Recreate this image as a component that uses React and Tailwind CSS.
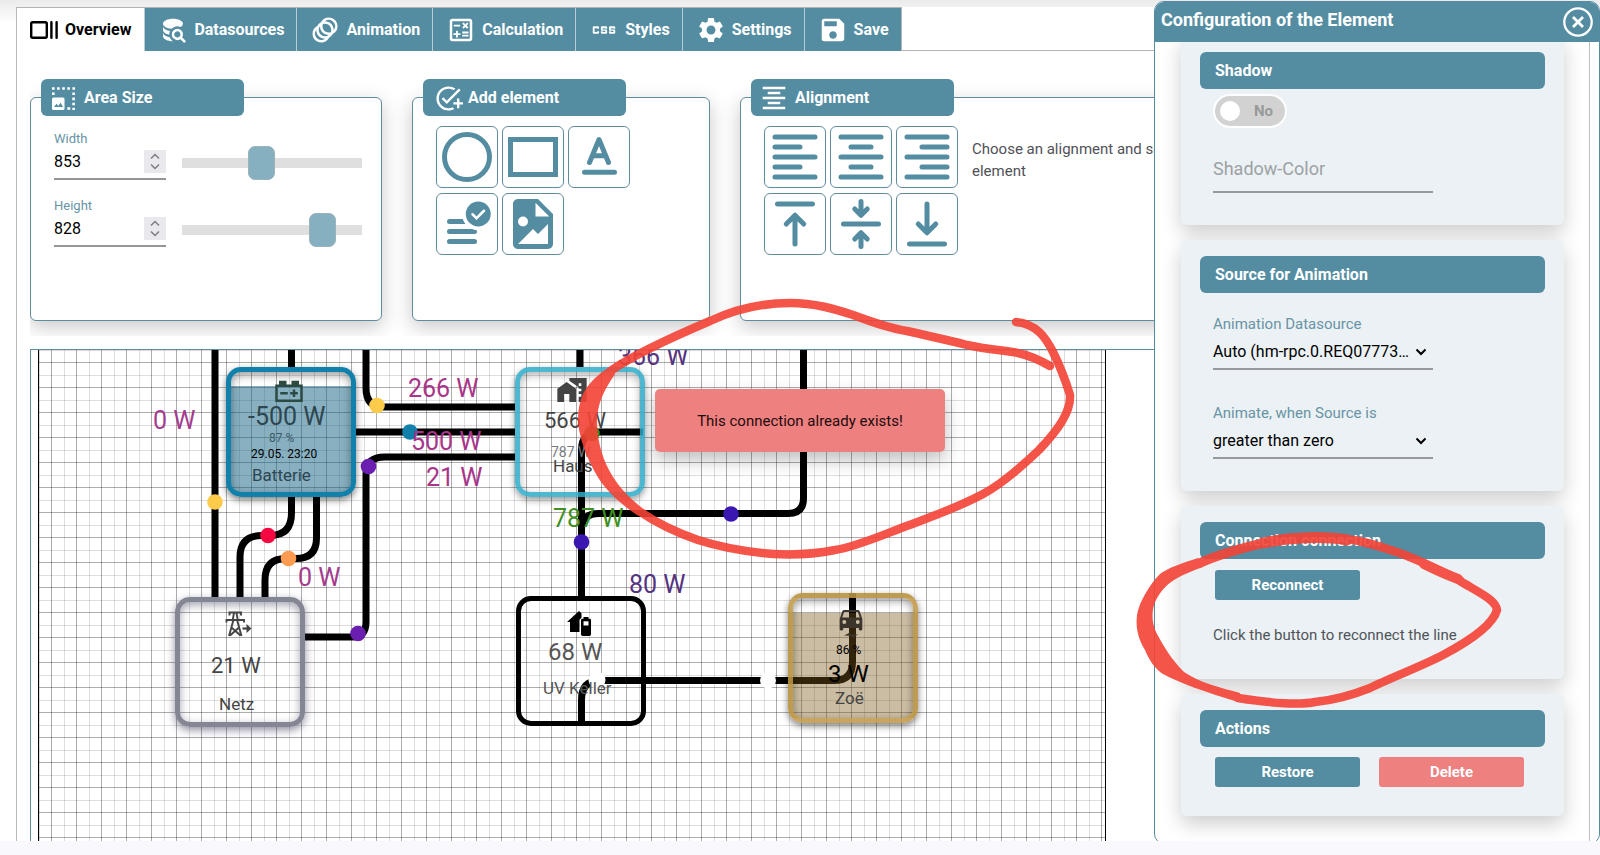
import React from "react";
import {
  MdAnimation,
  MdOutlineCalculate,
  MdCss,
  MdSettings,
  MdSave,
  MdAddTask,
  MdFormatAlignCenter,
  MdHomeWork,
} from "react-icons/md";

/* ---------- icons ---------- */

const Stroke = ({ children, className = "size-[60px]" }) => (
  <svg viewBox="0 0 24 24" className={className} fill="none" stroke="currentColor" strokeWidth="2" strokeLinecap="round" strokeLinejoin="round" aria-hidden="true">
    {children}
  </svg>
);

const OverviewIcon = () => (
  <svg viewBox="0 0 30 30" className="size-[30px]" fill="none" stroke="currentColor" strokeWidth="2.4" strokeLinecap="round" aria-hidden="true">
    <rect x="2.2" y="7.2" width="15.6" height="15.6" rx="1.5" />
    <path d="M22.4 7.3v15.4M27.6 7.3v15.4" />
  </svg>
);

const DatabaseSearchIcon = () => (
  <svg viewBox="0 0 24 24" className="size-[30px]" fill="currentColor" aria-hidden="true">
    <path d="M18.68 12.32a4.49 4.49 0 0 0-6.36.01 4.49 4.49 0 0 0 0 6.36 4.508 4.508 0 0 0 5.57.63L21 22.39 22.39 21l-3.09-3.11c1.13-1.77.87-4.09-.62-5.57m-1.41 4.95c-.98.98-2.56.97-3.54 0-.97-.98-.97-2.56.01-3.54.97-.97 2.55-.97 3.53 0 .97.98.97 2.56 0 3.54M10.9 20.1a6.527 6.527 0 0 1-1.48-2.32C6.27 17.25 4 15.76 4 14v3c0 2.21 3.58 4 8 4-.4-.26-.77-.56-1.1-.9M4 9v3c0 1.68 2.07 3.12 5 3.7v-.2c0-.93.2-1.85.58-2.69C6.34 12.3 4 10.79 4 9m8-6C7.58 3 4 4.79 4 7c0 2 3 3.68 6.85 4h.05c1.2-1.26 2.86-2 4.6-2 .91 0 1.81.19 2.64.56A3.215 3.215 0 0 0 20 7c0-2.21-3.58-4-8-4" />
  </svg>
);

const AreaIcon = () => (
  <svg viewBox="0 0 23 23" className="size-[23px]" aria-hidden="true">
    <path d="M0 1.5h23" stroke="white" strokeWidth="2.6" strokeDasharray="2.6 2.5" fill="none" />
    <path d="M21.6 5.5v17.5" stroke="white" strokeWidth="2.6" strokeDasharray="2.6 2.5" fill="none" />
    <path d="M1.3 5.4v2.6" stroke="white" strokeWidth="2.6" fill="none" />
    <path d="M15.3 21.5h3" stroke="white" strokeWidth="2.6" fill="none" />
    <rect x="0" y="10.5" width="12.5" height="12.5" rx="1.5" fill="white" />
    <path d="M2 20l2.5-3.2 1.8 2.1 2.2-3.2 2.6 4.3z" fill="#548da1" />
  </svg>
);

const TowerIcon = () => (
  <svg viewBox="0 0 28 26" className="h-[26px] w-[28px]" fill="none" stroke="currentColor" strokeWidth="1.9" aria-hidden="true">
    <path d="M4.500 4.600V1.500h11.500v3.100M1.500 11.500V9h17.500v2.500" />
    <path d="M9 1.500L7.800 9M11.500 1.500L12.700 9" />
    <path d="M8.300 9.500L4 25M12.200 9.500L16.500 25M6.500 16.500L15.500 24.500M14 16.500L5 24.500" />
    <path d="M17.500 17.500h6" strokeWidth="2.2" />
    <path d="M21.500 13l5 4.500-5 4.500z" fill="currentColor" stroke="none" />
  </svg>
);

const BatteryHomeIcon = () => (
  <svg viewBox="0 0 24 25" className="h-[25px] w-[24px]" aria-hidden="true">
    <path d="M0 11L12 0l2.5 2.2v4.5l-2 2V21H3V11z" fill="black" />
    <path d="M16.5 6h5v1.8h1.2c.7 0 1.3.6 1.3 1.3v14.2c0 .9-.7 1.7-1.7 1.7h-6.6c-1 0-1.7-.8-1.7-1.7V9.100c0-.7.6-1.3 1.300-1.300h1.200z" fill="black" />
    <path d="M16.500 10.300h5v4.200h-5z" fill="white" />
  </svg>
);

const CarIcon = () => (
  <svg viewBox="0 0 24 28" className="h-[28px] w-[24px]" fill="currentColor" aria-hidden="true">
    <path d="M20.800 1.500C20.500.6 19.700 0 18.700 0H5.300c-1 0-1.800.6-2.100 1.500L.7 9v10.300c0 .7.500 1.200 1.100 1.200H3c.7 0 1.200-.5 1.200-1.200V18h15.600v1.300c0 .7.500 1.200 1.200 1.200h1.200c.6 0 1.100-.5 1.100-1.200V9zM5.300 14a2 2 0 1 1 0-4 2 2 0 0 1 0 4zm13.400 0a2 2 0 1 1 0-4 2 2 0 0 1 0 4zM3.200 7.500l1.900-5.600h13.800l1.900 5.600z" />
    <path d="M5 25.500l6-3v2h8L13 28v-2z" />
  </svg>
);

/* ---------- toolbar ---------- */

const Tab = ({ icon, label, active }) => (
  <button
    type="button"
    role="tab"
    aria-selected={!!active}
    className={
      active
        ? "flex h-[43px] items-center gap-1.5 bg-white pl-[12px] pr-[13px] pt-px text-black"
        : "flex h-[43px] items-center gap-1.5 border-l border-[#b4ccd5] bg-[#548da1] pl-[13px] pr-[12px] pt-px text-white"
    }
  >
    {icon}
    {label}
  </button>
);

const Card = ({ title, icon, className, children }) => (
  <section className={"rounded-[6px] border border-[#608c9d] bg-white shadow-[0_6px_20px_rgba(0,0,0,0.22)] " + className}>
    <h2 className="-mt-[19px] ml-[10px] flex h-[37px] w-[203px] items-center gap-[9px] rounded-[6px] bg-[#548da1] pl-[11px] pt-px text-[16px] font-bold text-white">
      {icon}
      {title}
    </h2>
    {children}
  </section>
);

const Dimension = ({ id, label, value, position }) => (
  <div className="flex items-end gap-[16px]">
    <div className="relative w-[112px]">
      <label htmlFor={id} className="block text-[13px] leading-4 text-[#6894a5]">{label}</label>
      <input
        id={id}
        type="number"
        defaultValue={value}
        className="h-[33px] w-full border-b-2 border-[#96969a] pb-[2px] text-[16px] text-black outline-none [appearance:textfield] [&::-webkit-inner-spin-button]:appearance-none"
      />
      <svg viewBox="0 0 22 23" className="absolute right-0 bottom-[7px] h-[23px] w-[22px] bg-[#e9e9ed]" fill="none" stroke="#7d7d82" strokeWidth="1.500" aria-hidden="true">
        <path d="M7 8.500l4-4 4 4M7 14.500l4 4 4-4" />
      </svg>
    </div>
    <input
      type="range"
      aria-label={label + " slider"}
      min="0"
      max="1000"
      defaultValue={position}
      className="h-[34px] w-[180px] appearance-none bg-transparent [&::-webkit-slider-runnable-track]:h-[10px] [&::-webkit-slider-runnable-track]:bg-[#dfdfdf] [&::-webkit-slider-thumb]:-mt-[12px] [&::-webkit-slider-thumb]:h-[34px] [&::-webkit-slider-thumb]:w-[27px] [&::-webkit-slider-thumb]:appearance-none [&::-webkit-slider-thumb]:rounded-[7px] [&::-webkit-slider-thumb]:border [&::-webkit-slider-thumb]:border-[#9bb3bd] [&::-webkit-slider-thumb]:bg-[#86afbf]"
    />
  </div>
);

const Tool = ({ label, children }) => (
  <button type="button" aria-label={label} className="size-[62px] rounded-[6px] border border-[#608c9d] bg-white text-[#548da1]">
    {children}
  </button>
);

/* ---------- canvas ---------- */

const Node = ({ className, children }) => (
  <div className={"absolute size-[130px] rounded-[15px] border-[5px] " + className}>{children}</div>
);

const Label = ({ className, children }) => (
  <span className={"absolute leading-none whitespace-nowrap " + className}>{children}</span>
);

const Connections = () => (
  <svg viewBox="39 350 1066 491" className="absolute top-0 left-0 h-[491px] w-[1066px]" aria-hidden="true">
    <g fill="none" stroke="black" strokeWidth="7">
      <path d="M215 340V597" />
      <path d="M291.500 340V367" />
      <path d="M291.500 497V513Q291.500 535.500 270 535.500H262Q240 535.500 240 557V597" />
      <path d="M316.500 497V538Q316.500 558.500 296 558.500H286Q265 558.500 265 580V597" />
      <path d="M366 340V388Q366 407 383 407H515" />
      <path d="M356 432H515" />
      <path d="M515 457H385Q366 457 366 474V622Q366 637 352 637H305" />
      <path d="M580 340V367" />
      <path d="M803.500 340V498Q803.500 513.500 788 513.500H599Q581.500 513.500 581.500 530" />
      <path d="M643 432H600Q581.500 432 581.500 450V597" />
      <path d="M581.500 726V700Q581.500 680.500 600 680.500H834Q852.500 680.500 852.500 662V593" />
    </g>
    <g>
      <circle cx="215" cy="502" r="7.800" fill="#fdcb4a" />
      <circle cx="377" cy="405.500" r="7.800" fill="#fdcb4a" />
      <circle cx="410" cy="432" r="7.800" fill="#1181ac" />
      <circle cx="368.500" cy="466.500" r="7.800" fill="#6a1fb0" />
      <circle cx="358" cy="633.500" r="7.800" fill="#6a1fb0" />
      <circle cx="268" cy="535.500" r="7.800" fill="#f5083f" />
      <circle cx="288.500" cy="558.500" r="7.800" fill="#fd9c50" />
      <circle cx="592" cy="433.500" r="7.800" fill="#3a8a1e" />
      <circle cx="731" cy="514" r="7.800" fill="#3917b0" />
      <circle cx="581.500" cy="542" r="7.800" fill="#3917b0" />
      <circle cx="597" cy="680" r="8.500" fill="white" />
      <circle cx="768" cy="680.500" r="8" fill="white" />
    </g>
  </svg>
);

const Canvas = () => (
  <div className="relative ml-[7px] h-full w-[1068px] overflow-hidden border-x border-black bg-white bg-[linear-gradient(to_right,rgba(0,0,0,0.32)_1px,transparent_1px),linear-gradient(to_bottom,rgba(0,0,0,0.32)_1px,transparent_1px),linear-gradient(to_right,rgba(0,0,0,0.13)_1px,transparent_1px),linear-gradient(to_bottom,rgba(0,0,0,0.13)_1px,transparent_1px)] bg-[size:25px_25px] bg-[position:12px_0px,0px_12px,0px_0px,0px_0px]">
    <Connections />

    <Node className="top-[17px] left-[187px] border-[#1181ac] bg-[linear-gradient(to_bottom,transparent_14px,rgba(17,97,130,0.5)_14px)] bg-origin-padding shadow-[0_3px_7px_rgba(0,0,0,0.5),inset_0_3px_9px_rgba(0,0,0,0.4)]" />
    <Node className="top-[17px] left-[476px] border-[#2fabc9]/85 shadow-[0_3px_7px_rgba(0,0,0,0.4),inset_0_3px_8px_rgba(0,0,0,0.3)]" />
    <Node className="top-[247px] left-[136px] border-[#858694] shadow-[0_3px_8px_rgba(50,50,80,0.55),inset_0_3px_9px_rgba(50,50,80,0.45)]" />
    <Node className="top-[246px] left-[477px] border-black" />
    <Node className="top-[243px] left-[749px] border-[#be9644]/85 bg-[linear-gradient(to_bottom,transparent_15px,rgba(125,90,25,0.4)_15px)] bg-origin-padding shadow-[0_3px_7px_rgba(0,0,0,0.5),inset_0_3px_9px_rgba(0,0,0,0.4)]" />

    <svg viewBox="0 0 24 24" className="absolute top-[27px] left-[235px] size-[30px]" fill="#2b4a42" aria-hidden="true">
      <path d="M4 3V6H1V20H23V6H20V3H14V6H10V3H4M3 8H21V18H3V8M15 10V12H13V14H15V16H17V14H19V12H17V10H15M5 12V14H11V12H5Z" />
    </svg>
    <MdHomeWork className="absolute top-[24px] left-[517px] size-[32px] text-[#444]" aria-hidden="true" />
    <div className="absolute top-[261px] left-[186px] text-[#444]"><TowerIcon /></div>
    <div className="absolute top-[261px] left-[528px]"><BatteryHomeIcon /></div>
    <div className="absolute top-[260px] left-[800px] text-[#3b352b]"><CarIcon /></div>

    <Label className="top-[54px] left-[209px] text-[25px] text-[#2d4650]">-500 W</Label>
    <Label className="top-[82px] left-[230px] text-[12px] text-[#3f5c68]">87 %</Label>
    <Label className="top-[98px] left-[212px] text-[12px] text-black">29.05. 23:20</Label>
    <Label className="top-[117px] left-[213px] text-[17px] text-[#2d4650]">Batterie</Label>

    <Label className="top-[60px] left-[505px] text-[22px] text-[#444]">566 W</Label>
    <Label className="top-[95px] left-[512px] text-[14px] text-[#7b7b80]">787 W</Label>
    <Label className="top-[108px] left-[514px] text-[17px] text-[#444]">Haus</Label>

    <Label className="top-[305px] left-[172px] text-[22px] text-[#444]">21 W</Label>
    <Label className="top-[346px] left-[180px] text-[17px] text-[#444]">Netz</Label>

    <Label className="top-[290px] left-[509px] text-[24px] text-[#555]">68 W</Label>
    <Label className="top-[330px] left-[504px] text-[17px] text-[#555]">UV Keller</Label>

    <Label className="top-[294px] left-[797px] text-[12px] text-black">86 %</Label>
    <Label className="top-[312px] left-[789px] text-[24px] text-black">3 W</Label>
    <Label className="top-[340px] left-[796px] text-[17px] text-[#444]">Zoë</Label>

    <Label className="top-[58px] left-[114px] text-[25px] text-[#a33c8e]">0 W</Label>
    <Label className="top-[215px] left-[259px] text-[25px] text-[#a33c8e]">0 W</Label>
    <Label className="top-[26px] left-[369px] text-[25px] text-[#a8358a]">266 W</Label>
    <Label className="top-[79px] left-[372px] text-[25px] text-[#a8358a]">500 W</Label>
    <Label className="top-[115px] left-[387px] text-[25px] text-[#a8358a]">21 W</Label>
    <Label className="-top-[6px] left-[579px] text-[25px] text-[#553380]">366 W</Label>
    <Label className="top-[156px] left-[514px] text-[25px] text-[#3f8f22]">787 W</Label>
    <Label className="top-[222px] left-[590px] text-[25px] text-[#553380]">80 W</Label>
  </div>
);

/* ---------- configuration panel ---------- */

const PanelCard = ({ title, className = "", children }) => (
  <section className={"relative rounded-[6px] bg-[#ebf1f4] px-[19px] pt-[16px] shadow-[0_8px_20px_rgba(0,0,0,0.2)] " + className}>
    <h3 className="flex h-[37px] items-center rounded-[6px] bg-[#548da1] pt-px pl-[15px] text-[16px] font-bold text-white">{title}</h3>
    {children}
  </section>
);

const PanelButton = ({ danger, children }) => (
  <button type="button" className={"h-[30px] w-[145px] rounded-[3px] pt-px text-[15px] font-bold text-white " + (danger ? "bg-[#ee8080]" : "bg-[#548da1]")}>
    {children}
  </button>
);

const SelectField = ({ id, label, value }) => (
  <div className="relative w-[220px]">
    <label htmlFor={id} className="block text-[15px] leading-5 text-[#6894a5]">{label}</label>
    <select id={id} className="h-[36px] w-full appearance-none border-b-2 border-[#96999d] bg-transparent pt-[2px] text-[16px] text-black outline-none">
      <option>{value}</option>
    </select>
    <svg viewBox="0 0 12 8" className="pointer-events-none absolute right-[6px] bottom-[14px] h-[8px] w-[12px]" fill="none" stroke="black" strokeWidth="2" aria-hidden="true">
      <path d="M1.500 1.500L6 6l4.500-4.500" />
    </svg>
  </div>
);

const ConfigPanel = () => (
  <aside className="absolute top-px right-0 -bottom-[3px] flex w-[446px] flex-col overflow-hidden rounded-[10px] border border-[#548da1] bg-white">
    <header className="relative z-10 flex h-[40px] shrink-0 items-center justify-between bg-[#548da1] pl-[6px] pr-[6px]">
      <h2 className="pb-[6px] text-[18px] font-bold text-white">Configuration of the Element</h2>
      <button type="button" aria-label="Close" className="text-white">
        <svg viewBox="0 0 30 30" className="size-[30px]" fill="none" stroke="currentColor" aria-hidden="true">
          <circle cx="15" cy="15" r="13.700" strokeWidth="2.300" />
          <path d="M10 10l10 10M20 10L10 20" strokeWidth="2.800" />
        </svg>
      </button>
    </header>
    <div className="mr-[9px] flex-1 overflow-hidden border-r border-[#b8c0c6] pl-[26px] pr-[25px]">
      <div className="-mt-[6px] flex flex-col gap-[15px]">
        <PanelCard title="Shadow" className="pb-[32px]">
          <div className="flex flex-col items-start pl-[13px]">
            <label className="mt-[7px] ml-[2px] flex h-[30px] w-[70px] items-center gap-[14px] rounded-full bg-[#d2d2d2] pl-[5px] text-[15px] font-bold text-[#999] ring-2 ring-white">
              <input type="checkbox" aria-label="Shadow" className="size-[20px] appearance-none rounded-full bg-white" />
              No
            </label>
            <input
              type="text"
              aria-label="Shadow-Color"
              placeholder="Shadow-Color"
              className="mt-[31px] h-[36px] w-[220px] border-b-2 border-[#96999d] bg-transparent pb-[12px] text-[18px] outline-none placeholder:text-[#9da1a4]"
            />
          </div>
        </PanelCard>
        <PanelCard title="Source for Animation" className="pb-[32px]">
          <div className="mt-[21px] flex flex-col gap-[33px] pl-[13px]">
            <SelectField id="datasource" label="Animation Datasource" value="Auto (hm-rpc.0.REQ07773…" />
            <SelectField id="animate-when" label="Animate, when Source is" value="greater than zero" />
          </div>
        </PanelCard>
        <PanelCard title="Connection connection" className="pb-[34px]">
          <div className="mt-[11px] pl-[15px]">
            <PanelButton>Reconnect</PanelButton>
          </div>
          <p className="mt-[25px] pl-[13px] text-[15px] leading-5 text-[#4f5459]">Click the button to reconnect the line</p>
        </PanelCard>
        <PanelCard title="Actions" className="pb-[29px]">
          <div className="mt-[10px] flex gap-[19px] pl-[15px]">
            <PanelButton>Restore</PanelButton>
            <PanelButton danger>Delete</PanelButton>
          </div>
        </PanelCard>
      </div>
    </div>
  </aside>
);

/* ---------- hand-drawn markers ---------- */

const Markers = () => (
  <svg viewBox="560 280 960 440" className="pointer-events-none absolute top-[280px] left-[560px] h-[440px] w-[960px]" fill="none" stroke="#f44336" strokeLinecap="round" strokeLinejoin="round" aria-hidden="true">
    <g opacity="0.9">
      <path strokeWidth="8.500" d="M1016 322C1037 324 1046 338 1053 352S1066 382 1070 395C1071 412 1058 430 1039 450C1018 470 1000 485 983 494C955 509 930 517 904 527C880 536 855 547 835 550C810 555 790 555 773 554C748 552 720 547 698 540C675 532 655 522 639 511" />
      <path strokeWidth="8.500" d="M612 370C632 356 670 338 710 321C738 308 765 303 790 303C815 303 835 309 853 315C872 322 888 328 907 331C928 336 948 340 967 345C985 349 1000 350 1013 352C1030 355 1040 360 1050 366" />
      <path
        fill="#f44336"
        stroke="none"
        d="M609 367C595 377 588 384 583 394C577 408 577 422 580 434C584 452 592 468 601 482C611 495 622 505 637 515L642 508C628 497 617 485 609 470C601 455 597 438 597 420C598 404 602 393 615 374Z"
      />
      <path strokeWidth="8.500" d="M1460 580C1445 573 1425 563 1405 555C1385 548 1365 541 1347 539" />
      <path strokeWidth="11" d="M1347 540C1325 536 1290 537 1263 543" />
      <path strokeWidth="9.500" d="M1263 543C1240 549 1222 553 1200 563" />
      <path strokeWidth="8.500" d="M1238 698C1270 703 1300 705 1315 702C1335 700 1350 696 1370 688C1390 678 1420 667 1443 655C1460 646 1492 628 1497 610C1496 600 1480 593 1460 581" />
      <path strokeWidth="10" d="M1458 579C1450 576 1440 572 1424 564" />
      <path
        fill="#f44336"
        stroke="none"
        d="M1198 558C1182 563 1168 568 1160 574C1150 584 1139 602 1137 615C1135 630 1140 642 1145 650C1149 660 1155 669 1163 674C1180 683 1205 692 1238 702L1240 693C1222 688 1200 683 1184 672C1172 660 1164 647 1157 634C1152 624 1151 613 1155 602C1160 592 1165 586 1174 580C1184 574 1194 570 1203 567Z"
      />
    </g>
  </svg>
);

export default function App() {
  return (
    <div className="flex h-screen flex-col bg-[#f8f8fd] font-['Roboto',sans-serif] text-[15px]">
      <div className="relative flex flex-1 flex-col overflow-hidden bg-[linear-gradient(to_bottom,#ebebeb,#ffffff_24px)]">
        <main className="mt-[7px] ml-[16px] flex flex-1 flex-col border-l border-[#b9b9bb] bg-white">
          <div className="flex">
            <nav role="tablist" className="flex border-t border-r border-[#b0b4b6] text-[16px] font-bold">
              <Tab active icon={<OverviewIcon />} label="Overview" />
              <Tab icon={<DatabaseSearchIcon />} label="Datasources" />
              <Tab icon={<MdAnimation className="size-[30px]" />} label="Animation" />
              <Tab icon={<MdOutlineCalculate className="size-[30px]" />} label="Calculation" />
              <Tab icon={<MdCss className="size-[30px]" />} label="Styles" />
              <Tab icon={<MdSettings className="size-[30px]" />} label="Settings" />
              <Tab icon={<MdSave className="size-[30px]" />} label="Save" />
            </nav>
            <div className="flex-1 border-b border-[#b0b4b6]" />
          </div>

          <div className="ml-[13px] flex items-stretch gap-[30px] overflow-hidden pt-[46px] pb-[15px]">
            <Card title="Area Size" icon={<AreaIcon />} className="h-[224px] w-[352px] shrink-0">
              <div className="mt-[15px] flex flex-col gap-[18px] pl-[23px]">
                <Dimension id="area-width" label="Width" value="853" position="430" />
                <Dimension id="area-height" label="Height" value="828" position="827" />
              </div>
            </Card>

            <Card title="Add element" icon={<MdAddTask className="-mr-[4px] size-[29px]" />} className="h-[224px] w-[298px] shrink-0">
              <div className="mt-[10px] grid w-fit grid-cols-3 gap-x-1 gap-y-[5px] pl-[23px]">
                <Tool label="Circle"><Stroke><circle cx="12" cy="12" r="9" /></Stroke></Tool>
                <Tool label="Rectangle"><Stroke><path strokeLinejoin="miter" d="M3 5h18v14H3z" /></Stroke></Tool>
                <Tool label="Text"><Stroke><path d="M6.200 18.100h12M8.200 14.200L12 5l3.800 9.200M9.600 11.500h4.800" /></Stroke></Tool>
                <Tool label="Datasource text">
                  <svg viewBox="0 0 24 24" className="size-[60px]" fill="none" stroke="currentColor" strokeWidth="2" strokeLinecap="round" aria-hidden="true">
                    <path d="M5 11h8M5 15h10M5 19h10" />
                    <circle cx="16.500" cy="8" r="6.500" fill="white" stroke="none" />
                    <circle cx="16.500" cy="8" r="5" fill="currentColor" stroke="none" />
                    <path d="M14.200 8.100l1.600 1.600 3-3" stroke="white" strokeWidth="1" />
                  </svg>
                </Tool>
                <Tool label="Image">
                  <svg viewBox="0 0 24 24" className="size-[60px]" fill="currentColor" aria-hidden="true">
                    <path d="M13,9H18.500L13,3.500V9M6,2H14L20,8V20A2,2 0 0,1 18,22H6C4.890,22 4,21.100 4,20V4C4,2.890 4.890,2 6,2M6,20H15L18,20V12L14,16L12,14L6,20M8,9A2,2 0 0,0 6,11A2,2 0 0,0 8,13A2,2 0 0,0 10,11A2,2 0 0,0 8,9Z" />
                  </svg>
                </Tool>
              </div>
            </Card>

            <Card title="Alignment" icon={<MdFormatAlignCenter className="-mx-[3px] size-[30px]" />} className="h-[224px] min-w-0 flex-1">
              <div className="mt-[10px] flex gap-[14px] pl-[23px]">
                <div className="grid shrink-0 grid-cols-3 gap-x-1 gap-y-[5px]">
                  <Tool label="Align left"><Stroke><path d="M4 4h16M4 8h10M4 12h16M4 16h10M4 20h16" /></Stroke></Tool>
                  <Tool label="Align center"><Stroke><path d="M4 4h16M8 8h8M4 12h16M8 16h8M4 20h16" /></Stroke></Tool>
                  <Tool label="Align right"><Stroke><path d="M4 4h16M10 8h10M4 12h16M10 16h10M4 20h16" /></Stroke></Tool>
                  <Tool label="Align top"><Stroke><path d="M5 4h14M12 20V9M8.500 12L12 8.500l3.500 3.500" /></Stroke></Tool>
                  <Tool label="Align middle"><Stroke><path d="M5 12h14M12 3v5M9.500 6L12 8.500 14.500 6M12 21v-5M9.500 18l2.500-2.500 2.500 2.500" /></Stroke></Tool>
                  <Tool label="Align bottom"><Stroke><path d="M5 20h14M12 4v11M8.500 12l3.500 3.500 3.500-3.500" /></Stroke></Tool>
                </div>
                <p className="mt-[12px] leading-[22px] whitespace-nowrap text-[#4f5157]">
                  Choose an alignment and select
                  <br />
                  element
                </p>
              </div>
            </Card>
          </div>

          <div className="mt-[13px] ml-[13px] flex-1 overflow-hidden border-t border-l border-[#608c9d]">
            <Canvas />
          </div>
        </main>

        <div role="alert" className="absolute top-[389px] left-[655px] flex h-[63px] w-[290px] items-center justify-center rounded-[5px] bg-[#ef8080] pt-[2px] text-[15px] text-[#1c0c0c] shadow-[0_8px_18px_rgba(0,0,0,0.25)]">
          This connection already exists!
        </div>

        <ConfigPanel />
        <Markers />
      </div>
      <footer className="h-[14px] shrink-0" />
    </div>
  );
}
